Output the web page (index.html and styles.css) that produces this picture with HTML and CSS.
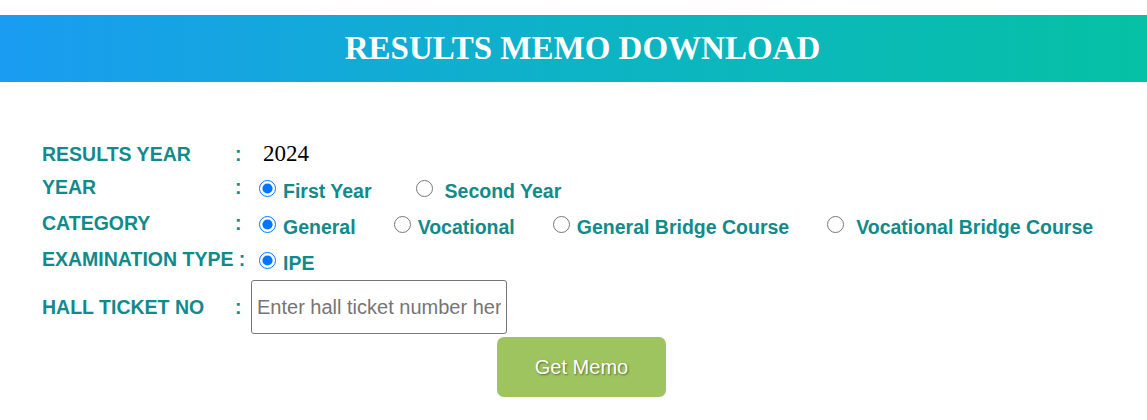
FILE: index.html
```html
<!DOCTYPE html>
<html>
<head>
<meta charset="utf-8">
<link rel="stylesheet" href="styles.css">
</head>
<body>
<div class="header"><h1 class="title">RESULTS MEMO DOWNLOAD</h1></div>
<form class="form">
  <div class="row">
    <div class="label">RESULTS YEAR</div>
    <div class="colon">:</div>
    <div class="value year-val">2024</div>
  </div>
  <div class="row">
    <div class="label up">YEAR</div>
    <div class="colon up">:</div>
    <div class="value opts opts-year">
      <label class="opt"><input type="radio" name="yr" checked><span>First Year</span></label>
      <label class="opt wide"><input type="radio" name="yr"><span>Second Year</span></label>
    </div>
  </div>
  <div class="row">
    <div class="label up">CATEGORY</div>
    <div class="colon up">:</div>
    <div class="value opts opts-cat">
      <label class="opt"><input type="radio" name="cat" checked><span>General</span></label>
      <label class="opt"><input type="radio" name="cat"><span>Vocational</span></label>
      <label class="opt"><input type="radio" name="cat"><span>General Bridge Course</span></label>
      <label class="opt wide"><input type="radio" name="cat"><span>Vocational Bridge Course</span></label>
    </div>
  </div>
  <div class="row">
    <div class="label up">EXAMINATION TYPE :</div>
    <div class="colon up"></div>
    <div class="value opts">
      <label class="opt"><input type="radio" name="et" checked><span>IPE</span></label>
    </div>
  </div>
  <div class="row row-input">
    <div class="label">HALL TICKET NO</div>
    <div class="colon">:</div>
    <div class="value"><input class="ticket" type="text" placeholder="Enter hall ticket number here"></div>
  </div>
  <div class="actions">
    <button class="btn" type="button">Get Memo</button>
  </div>
</form>
</body>
</html>
```
FILE: styles.css
```css
html, body {
  margin: 0;
  padding: 0;
  background: #ffffff;
}
body {
  font-family: "Liberation Sans", Arial, sans-serif;
}
.header {
  margin-top: 15px;
  height: 67px;
  background: linear-gradient(90deg, #1a9cf2 0%, #0db3c6 50%, #06c1a5 100%);
  display: flex;
  align-items: center;
  justify-content: center;
  padding-left: 18px;
}
.title {
  margin: 0;
  font-family: "Liberation Serif", "Times New Roman", serif;
  font-weight: bold;
  font-size: 33px;
  color: #ffffff;
}
.form {
  padding: 54px 0 0 42px;
  margin: 0;
}
.row {
  display: flex;
  align-items: center;
  height: 36px;
}
.label {
  width: 191px;
  flex: none;
  font-size: 19.5px;
  font-weight: bold;
  color: #118a8b;
  white-space: nowrap;
}
.up {
  margin-bottom: 6px;
}
.colon {
  width: 16px;
  padding-left: 2px;
  flex: none;
  font-size: 19.5px;
  font-weight: bold;
  color: #118a8b;
}
.value {
  display: flex;
  align-items: center;
}
.year-val {
  font-family: "Liberation Serif", "Times New Roman", serif;
  font-size: 23px;
  color: #000000;
  padding-left: 12px;
}
.opts {
  padding-left: 8px;
}
.opt {
  display: inline-flex;
  align-items: center;
  font-size: 19.5px;
  font-weight: bold;
  color: #118a8b;
  white-space: nowrap;
}
.opt input {
  width: 17px;
  height: 17px;
  margin: 0 7px 4px 0;
}
.opt.wide input {
  margin-right: 12px;
}
.opt span {
  padding-top: 2px;
}
.opts-year .opt + .opt {
  margin-left: 44px;
}
.opts-cat .opt + .opt {
  margin-left: 38px;
}
.row-input {
  height: 54px;
}
.ticket {
  box-sizing: border-box;
  width: 256px;
  height: 54px;
  border: 1px solid #767676;
  border-radius: 3px;
  padding: 0 5px;
  font-family: "Liberation Sans", Arial, sans-serif;
  font-size: 20px;
  color: #222222;
  margin: 0;
}
.ticket::placeholder {
  color: #757575;
}
.actions {
  padding-left: 455px;
  padding-top: 3px;
}
.btn {
  width: 169px;
  height: 60px;
  border: none;
  border-radius: 7px;
  background: #9dc45e;
  color: #ffffff;
  font-family: "Liberation Sans", Arial, sans-serif;
  font-size: 20px;
  text-shadow: 1px 1px 2px rgba(0, 0, 0, 0.45);
  cursor: pointer;
}
```
